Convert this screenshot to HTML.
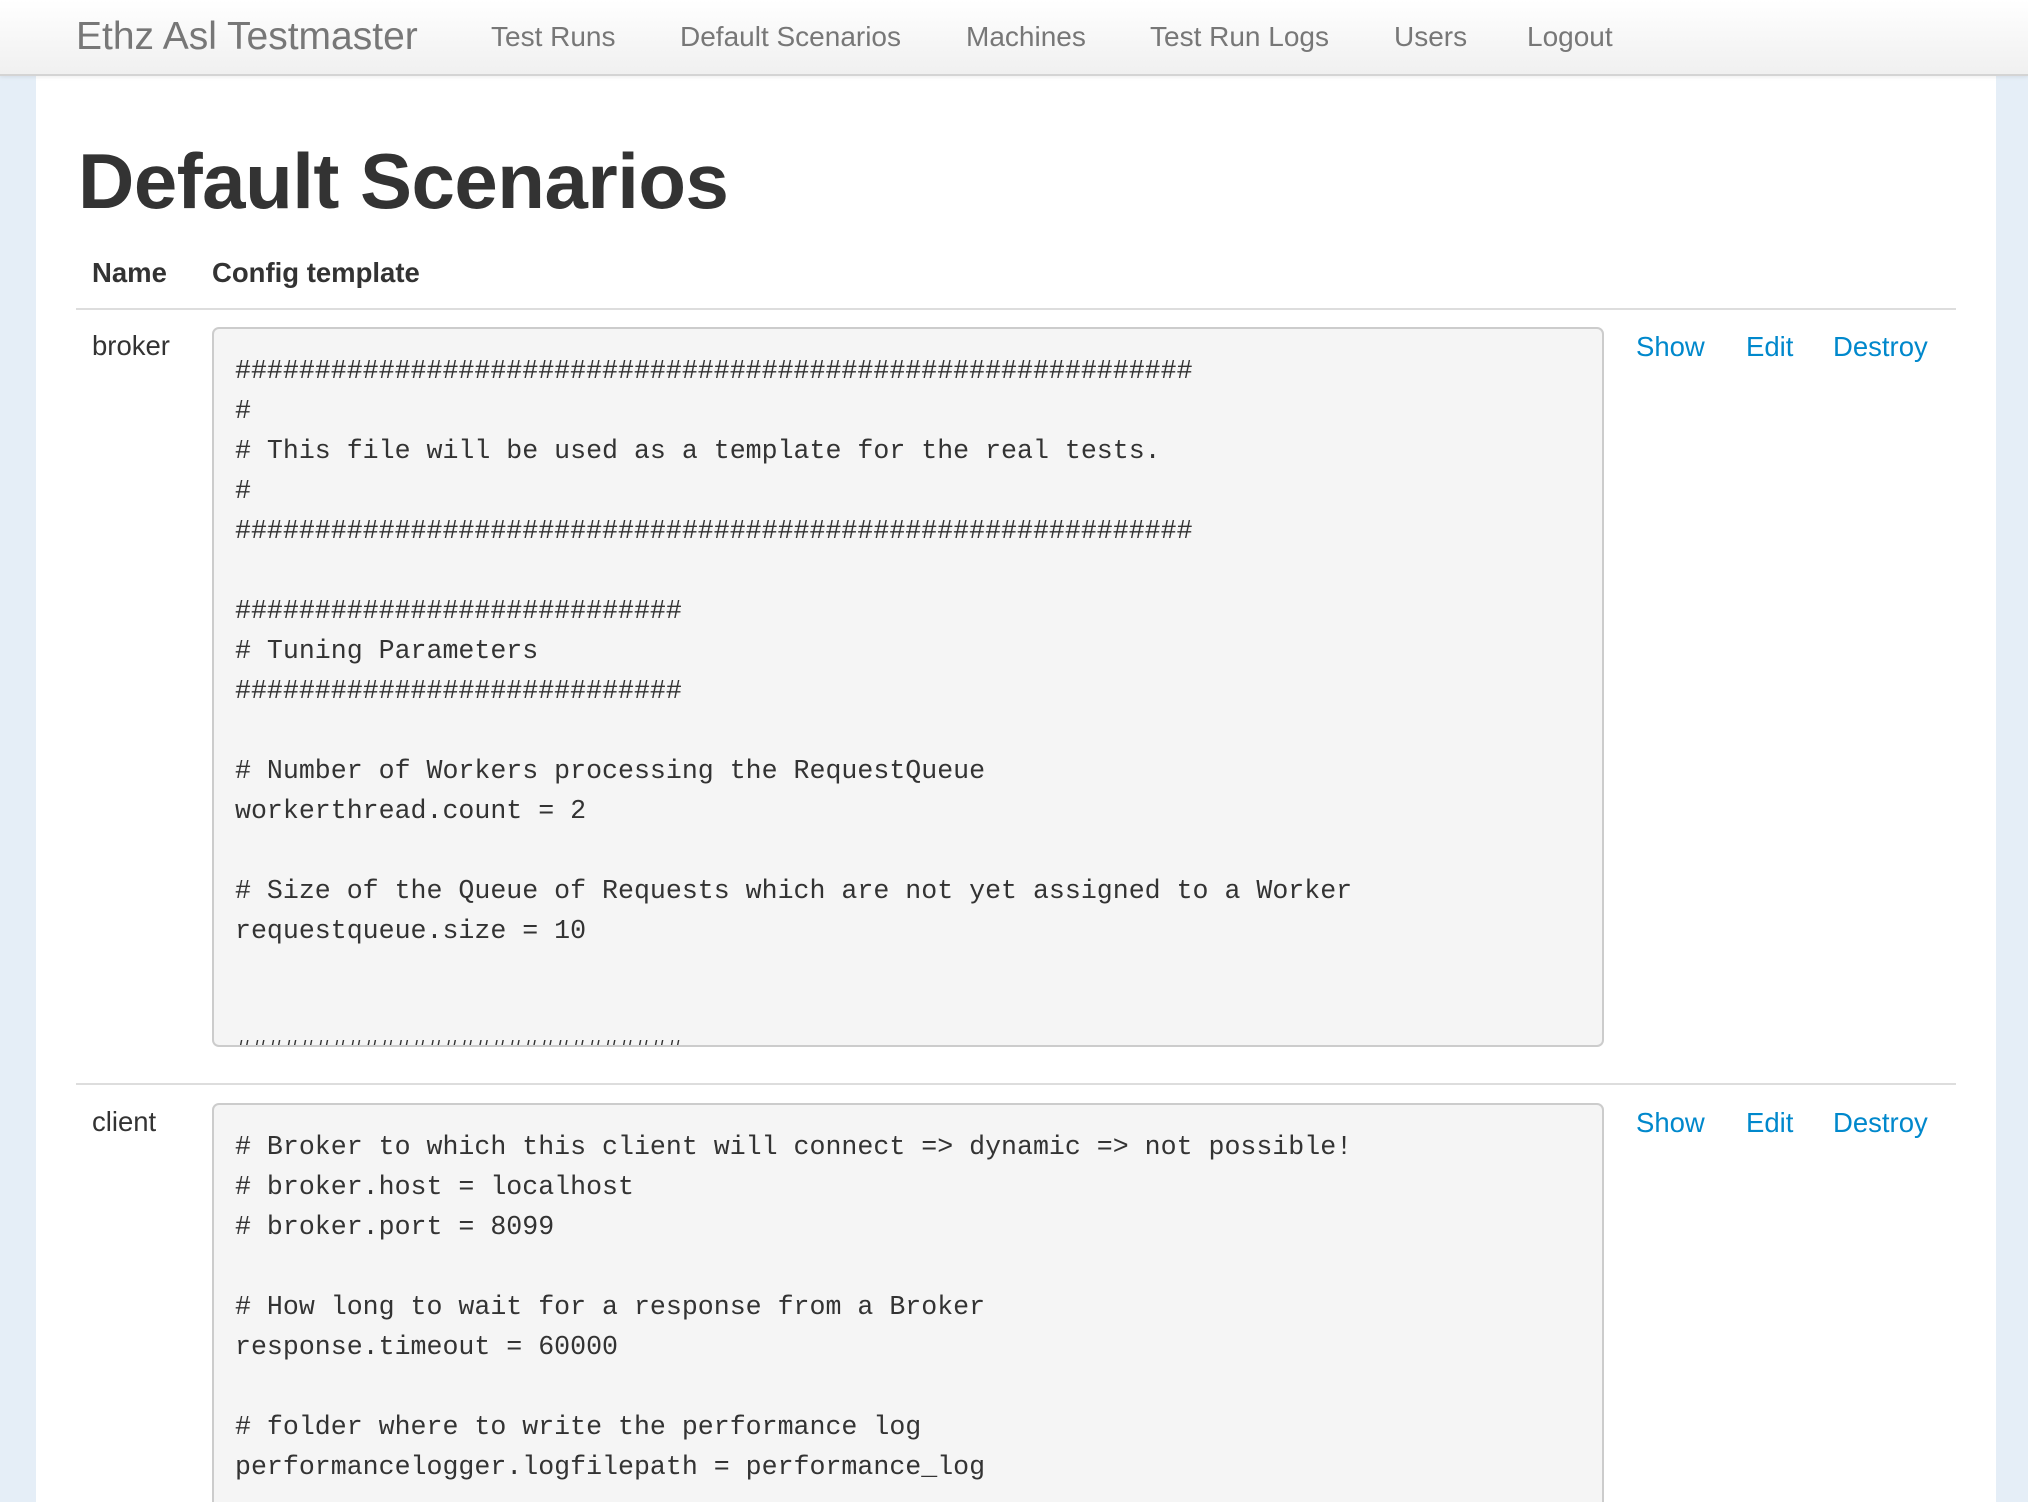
<!DOCTYPE html>
<html><head><meta charset="utf-8"><style>
*{margin:0;padding:0;box-sizing:border-box}
html,body{width:2028px;height:1502px;overflow:hidden}
body{background:#e5eef7;font-family:"Liberation Sans",Arial,sans-serif;color:#333;position:relative}
.nav{position:absolute;left:0;top:0;width:2028px;height:76px;background:linear-gradient(#fff,#f0f0f0);border-bottom:2px solid #d4d4d4;box-shadow:0 1px 4px rgba(0,0,0,.08);z-index:2}
.nav span{position:absolute;top:0;line-height:74px;font-size:28px;color:#777}
.nav .brand{font-size:39px;color:#777;left:76px}
.main{position:absolute;left:36px;top:76px;width:1960px;height:1426px;background:#fff}
h1{position:absolute;left:78px;top:136px;font-size:78px;font-weight:bold;color:#333;letter-spacing:-0.5px}
.th{position:absolute;top:257px;font-size:27.5px;font-weight:bold}
.hr{position:absolute;left:76px;width:1880px;height:2px;background:#ddd}
.name{position:absolute;left:92px;font-size:27.5px}
pre{position:absolute;left:212px;width:1392px;background:#f5f5f5;border:2px solid #ccc;border-radius:7px;font-family:"Liberation Mono",monospace;font-size:26.6px;line-height:40px;padding:22px 0 0 21px;overflow:hidden;color:#333}
.a{position:absolute;font-size:27.5px;color:#0088cc}
</style></head><body>
<div class="nav">
<span class="brand">Ethz Asl Testmaster</span>
<span style="left:491px">Test Runs</span>
<span style="left:680px">Default Scenarios</span>
<span style="left:966px">Machines</span>
<span style="left:1150px">Test Run Logs</span>
<span style="left:1394px">Users</span>
<span style="left:1527px">Logout</span>
</div>
<div class="main"></div>
<h1>Default Scenarios</h1>
<div class="th" style="left:92px">Name</div>
<div class="th" style="left:212px">Config template</div>
<div class="hr" style="top:308px"></div>
<div class="name" style="top:330px">broker</div>
<pre style="top:327px;height:720px">############################################################
#
# This file will be used as a template for the real tests.
#
############################################################

############################
# Tuning Parameters
############################

# Number of Workers processing the RequestQueue
workerthread.count = 2

# Size of the Queue of Requests which are not yet assigned to a Worker
requestqueue.size = 10


############################</pre>
<div class="a" style="left:1636px;top:331px">Show</div>
<div class="a" style="left:1746px;top:331px">Edit</div>
<div class="a" style="left:1833px;top:331px">Destroy</div>
<div class="hr" style="top:1083px"></div>
<div class="name" style="top:1106px">client</div>
<pre style="top:1103px;height:420px">
# Broker to which this client will connect => dynamic => not possible!
# broker.host = localhost
# broker.port = 8099

# How long to wait for a response from a Broker
response.timeout = 60000

# folder where to write the performance log
performancelogger.logfilepath = performance_log</pre>
<div class="a" style="left:1636px;top:1107px">Show</div>
<div class="a" style="left:1746px;top:1107px">Edit</div>
<div class="a" style="left:1833px;top:1107px">Destroy</div>
</body></html>
